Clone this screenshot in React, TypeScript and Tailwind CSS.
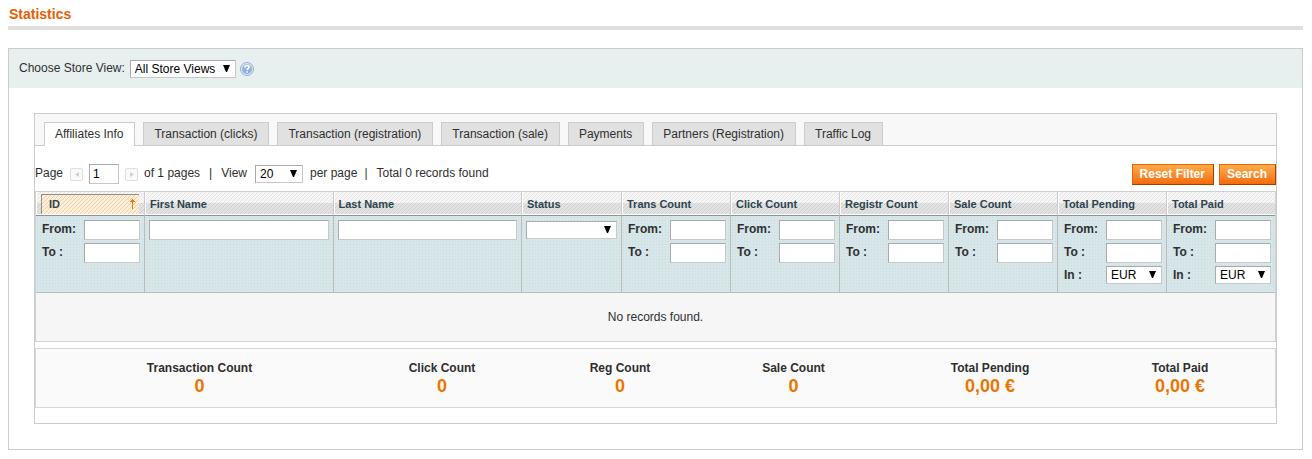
import React from "react";

const stripes =
  "bg-[linear-gradient(135deg,rgba(0,0,0,0.08)_12.5%,transparent_12.5%,transparent_50%,rgba(0,0,0,0.08)_50%,rgba(0,0,0,0.08)_62.5%,transparent_62.5%),linear-gradient(to_bottom,#f6f6f6_0px,#f6f6f6_11px,#e2e2e2_11px,#e2e2e2_100%)] bg-[length:4px_4px,100%_100%] shadow-[inset_1px_-1px_0_#fff]";
const sortedStripes =
  "bg-[#fdefdd] bg-[linear-gradient(135deg,#f7cf9f_12.5%,transparent_12.5%,transparent_50%,#f7cf9f_50%,#f7cf9f_62.5%,transparent_62.5%)] bg-[length:4px_4px]";
const dots =
  "bg-[#d7e6e9] bg-[radial-gradient(#c9dbdb_1px,transparent_1px)] bg-[length:3px_3px]";
const field =
  "border border-[#c8c8c8] border-t-[#aaa] border-l-[#aaa] bg-white text-black outline-none";

type DropProps = { label: string; options: string[]; className: string };

function Drop({ label, options, className }: DropProps) {
  return (
    <span className={`relative inline-flex h-[18px] ${className}`}>
      <select aria-label={label} className={`h-full w-full appearance-none pl-1 pr-4 leading-4 ${field}`}>
        {options.map((o) => (
          <option key={o}>{o}</option>
        ))}
      </select>
      <svg viewBox="0 0 7 7" className="pointer-events-none absolute right-[6px] top-[5px] h-[7px] w-[7px]" aria-hidden="true">
        <path d="M0 0h7L4 7H3z" fill="#000" />
      </svg>
    </span>
  );
}

function HelpIcon() {
  return (
    <svg viewBox="0 0 14 14" className="ml-1 h-[14px] w-[14px]" role="img" aria-label="Help">
      <defs>
        <linearGradient id="help" x1="0" y1="0" x2="0" y2="1">
          <stop offset="0" stopColor="#a3bedd" />
          <stop offset="1" stopColor="#85abd6" />
        </linearGradient>
      </defs>
      <circle cx="7" cy="7" r="6.5" fill="#dbe7f4" stroke="#93b0d3" strokeWidth="1" />
      <circle cx="7" cy="7" r="5" fill="url(#help)" />
      <path d="M5 5.600C5 4.300 5.800 3.600 7 3.600s2 .7 2 1.700c0 1.300-1.900 1.400-1.900 2.800" fill="none" stroke="#fff" strokeWidth="1.500" />
      <rect x="6.300" y="9.200" width="1.600" height="1.500" fill="#fff" />
    </svg>
  );
}

function PagerButton({ label, next }: { label: string; next?: boolean }) {
  return (
    <button type="button" aria-label={label} className="flex h-[13px] w-[13px] items-center justify-center rounded-[2px] border border-[#dedede] bg-[#fafafa]">
      <svg viewBox="0 0 4 5" className="h-[5px] w-[4px]" aria-hidden="true">
        <path d={next ? "M0 0v5l4-2.500z" : "M4 0v5L0 2.500z"} fill="#cfcfcf" />
      </svg>
    </button>
  );
}

const tabs = [
  "Affiliates Info",
  "Transaction (clicks)",
  "Transaction (registration)",
  "Transaction (sale)",
  "Payments",
  "Partners (Registration)",
  "Traffic Log",
];

type Column = { title: string; kind: "range" | "money" | "text" | "status"; width: string };

const columns: Column[] = [
  { title: "ID", kind: "range", width: "w-[109px]" },
  { title: "First Name", kind: "text", width: "w-auto" },
  { title: "Last Name", kind: "text", width: "w-auto" },
  { title: "Status", kind: "status", width: "w-[100px]" },
  { title: "Trans Count", kind: "range", width: "w-[109px]" },
  { title: "Click Count", kind: "range", width: "w-[109px]" },
  { title: "Registr Count", kind: "range", width: "w-[109px]" },
  { title: "Sale Count", kind: "range", width: "w-[109px]" },
  { title: "Total Pending", kind: "money", width: "w-[109px]" },
  { title: "Total Paid", kind: "money", width: "w-[108px]" },
];

function Filter({ column }: { column: Column }) {
  const { title, kind } = column;
  if (kind === "text") return <input aria-label={title} className={`block h-5 w-full px-1 ${field}`} />;
  if (kind === "status") return <Drop label={title} options={["", "Enabled", "Disabled"]} className="mt-px w-full" />;
  return (
    <div className="flex flex-col gap-[3px] pl-[2px] font-bold">
      {["From:", "To :"].map((l) => (
        <label key={l} className="flex items-start justify-between leading-[18px]">
          {l}
          <input className={`h-5 w-14 px-1 font-normal ${field}`} />
        </label>
      ))}
      {kind === "money" && (
        <label className="flex items-start justify-between leading-[18px]">
          In :
          <Drop label={`${title} currency`} options={["EUR", "USD"]} className="w-14 font-normal" />
        </label>
      )}
    </div>
  );
}

const totals = [
  ["Transaction Count", "0"],
  ["Click Count", "0"],
  ["Reg Count", "0"],
  ["Sale Count", "0"],
  ["Total Pending", "0,00 €"],
  ["Total Paid", "0,00 €"],
];

const action =
  "h-[21px] border border-[#ed6502] border-r-[#a04300] border-b-[#a04300] bg-linear-to-b from-[#ffac47] to-[#f76a05] pr-2 pl-[7px] pb-px font-bold leading-[18px] text-white";

export default function App() {
  return (
    <main className="bg-white px-2 pr-[9px] pb-2 font-['Liberation_Sans',Arial,sans-serif] text-xs text-[#2f2f2f]">
      <h1 className="border-b-4 border-[#dfdfdf] pt-[5px] pb-[3px] pl-px text-sm leading-[18px] font-bold text-[#eb5e00]">Statistics</h1>

      <section className="mt-[18px] border border-[#ccc]">
        <div className="flex h-[39px] items-center bg-[#e7efef] pl-[10px]">
          <span className="mr-[5px] pb-0.5">Choose Store View:</span>
          <Drop label="Choose Store View" options={["All Store Views"]} className="w-[106px]" />
          <HelpIcon />
        </div>

        <div className="m-[25px] border border-[#ccc] pb-[15px]">
          <nav className="flex gap-2 border-b border-[#ccc] bg-[#f8f8f8] pt-2 pl-[9px]">
            {tabs.map((t, i) => (
              <a
                key={t}
                href="#"
                className={
                  i === 0
                    ? "-mb-px border border-b-0 border-[#ccc] bg-white pr-[11px] pb-px pl-[10px] leading-[22px]"
                    : "border border-b-0 border-[#ccc] bg-[#e1e1e1] pr-[11px] pl-[10px] leading-[22px]"
                }
              >
                {t}
              </a>
            ))}
          </nav>

          <div className="flex h-[45px] items-start justify-between pt-[18px]">
            <div className="flex h-5 items-center whitespace-nowrap">
              <span className="mr-[7px] pb-0.5">Page</span>
              <PagerButton label="Previous page" />
              <input aria-label="Page number" defaultValue="1" className={`mx-[6px] h-5 w-[30px] px-[3px] ${field}`} />
              <PagerButton label="Next page" next />
              <span className="ml-[6px] pb-0.5">of 1 pages</span>
              <span className="mr-[9px] ml-[9px] pb-0.5">|</span>
              <span className="mr-2 pb-0.5">View</span>
              <Drop label="Records per page" options={["20", "30", "50"]} className="w-12" />
              <span className="ml-[7px] pb-0.5">per page</span>
              <span className="mr-[9px] ml-[7px] pb-0.5">|</span>
              <span className="pb-0.5">Total 0 records found</span>
            </div>
            <div className="flex gap-[5px]">
              <button type="button" className={action}>Reset Filter</button>
              <button type="button" className={action}>Search</button>
            </div>
          </div>

          <table className="w-full table-fixed border-separate border-spacing-0 border border-[#cbd3d4]">
            <colgroup>
              {columns.map((c) => (
                <col key={c.title} className={c.width} />
              ))}
            </colgroup>
            <thead>
              <tr>
                {columns.map((c, i) => (
                  <th
                    key={c.title}
                    scope="col"
                    className={`h-6 border-r border-b border-r-[#ccc] border-b-[#8c9296] p-0 text-left text-[11px] leading-4 text-[#2d444f] last:border-r-0 ${stripes}`}
                  >
                    {i === 0 ? (
                      <span className={`mx-[5px] mt-px flex h-5 items-center justify-between border-t border-l border-[#988c80] pr-1 pb-0.5 pl-[7px] ${sortedStripes}`}>
                        {c.title}
                        <svg viewBox="0 0 5 10" className="h-[10px] w-[5px]" aria-hidden="true">
                          <path d="M2 0h1v1h1v1h1v1H3v7H2V3H0V2h1V1h1z" fill="#ff7300" />
                        </svg>
                      </span>
                    ) : (
                      <span className="block pl-[5px]">{c.title}</span>
                    )}
                  </th>
                ))}
              </tr>
            </thead>
            <tbody>
              <tr>
                {columns.map((c) => (
                  <td key={c.title} className={`h-[77px] border-r border-b border-[#bbb] px-1 pt-1 pb-0 align-top last:border-r-0 ${dots}`}>
                    <Filter column={c} />
                  </td>
                ))}
              </tr>
              <tr>
                <td colSpan={10} className="h-12 bg-[#f6f6f6] p-0 text-center">No records found.</td>
              </tr>
            </tbody>
          </table>

          <dl className="mt-[6px] grid grid-cols-[273fr_212fr_144fr_203fr_190fr_190fr] border border-[#d6d6d6] bg-[#fafafa] pt-[10px] pb-[11px] pl-[27px] text-center font-bold">
            {totals.map(([name, value]) => (
              <div key={name}>
                <dt className="leading-[18px]">{name}</dt>
                <dd className="text-lg leading-[19px] text-[#ea7601]">{value}</dd>
              </div>
            ))}
          </dl>
        </div>
      </section>
    </main>
  );
}
